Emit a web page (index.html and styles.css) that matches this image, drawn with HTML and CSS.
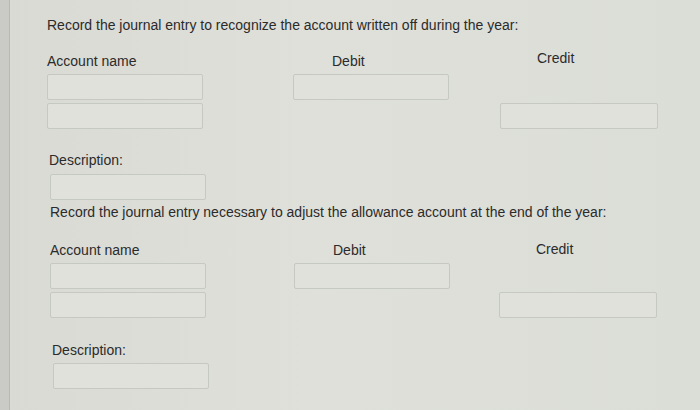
FILE: index.html
```html
<!DOCTYPE html>
<html>
<head>
<meta charset="utf-8">
<link rel="stylesheet" href="styles.css">
</head>
<body>
<div class="page">
  <div class="edge"></div>
  <div class="content">
    <section class="entry entry-one">
      <p class="prompt">Record the journal entry to recognize the account written off during the year:</p>
      <div class="grid">
        <div class="label">Account name</div>
        <div class="label label-debit">Debit</div>
        <div class="label label-credit">Credit</div>
        <div class="box"></div>
        <div class="box"></div>
        <div class="empty"></div>
        <div class="box"></div>
        <div class="empty"></div>
        <div class="box"></div>
      </div>
      <div class="label desc-label">Description:</div>
      <div class="box"></div>
    </section>
    <section class="entry entry-two">
      <p class="prompt">Record the journal entry necessary to adjust the allowance account at the end of the year:</p>
      <div class="grid">
        <div class="label">Account name</div>
        <div class="label label-debit">Debit</div>
        <div class="label label-credit">Credit</div>
        <div class="box"></div>
        <div class="box"></div>
        <div class="empty"></div>
        <div class="box"></div>
        <div class="empty"></div>
        <div class="box"></div>
      </div>
      <div class="label desc-label">Description:</div>
      <div class="box"></div>
    </section>
  </div>
</div>
</body>
</html>
```
FILE: styles.css
```css
html, body {
  margin: 0;
  padding: 0;
  background: #dcddd7;
}
body {
  font-family: "Liberation Sans", Arial, sans-serif;
  color: #2b2b2b;
  width: 700px;
  height: 410px;
  overflow: hidden;
}
.page {
  display: flex;
  height: 410px;
  background: linear-gradient(90deg, #d9dad4 0%, #dfe0da 45%, #dbddd7 100%);
}
.edge {
  width: 9px;
  flex: none;
  background: #cacbc6;
  border-right: 1px solid #b9bab5;
}
.content {
  flex: 1;
}
.entry-one {
  padding: 17px 0 0 37px;
}
.entry-two {
  padding: 4px 0 0 40px;
}
.prompt {
  margin: 0;
  font-size: 14px;
  line-height: 16px;
}
.grid {
  display: grid;
  grid-template-columns: 246px 207px 160px;
  grid-template-rows: 16px 26px 26px;
  row-gap: 4px;
  margin-top: 20px;
}
.entry-two .grid {
  margin-top: 22px;
  grid-template-columns: 244px 205px 160px;
}
.label {
  font-size: 14px;
  line-height: 16px;
}
.grid .label {
  margin-bottom: 1px;
}
.label-debit {
  padding-left: 39px;
}
.label-credit {
  padding-left: 37px;
  position: relative;
  top: -3px;
}
.entry-two .label-credit {
  top: -1px;
}
.grid .box:nth-child(4), .grid .box:nth-child(5) {
  margin-top: 1px;
}
.box {
  box-sizing: border-box;
  width: 156px;
  height: 26px;
  border: 1px solid #c6c8c2;
  border-radius: 2px;
  background: #e0e1db;
}
.grid .box:nth-child(9) {
  width: 158px;
}
.desc-label {
  margin-top: 23px;
  margin-bottom: 6px;
  padding-left: 2px;
}
.desc-label + .box {
  margin-left: 3px;
}
.entry-two .desc-label {
  margin-top: 24px;
  margin-bottom: 5px;
}
```
